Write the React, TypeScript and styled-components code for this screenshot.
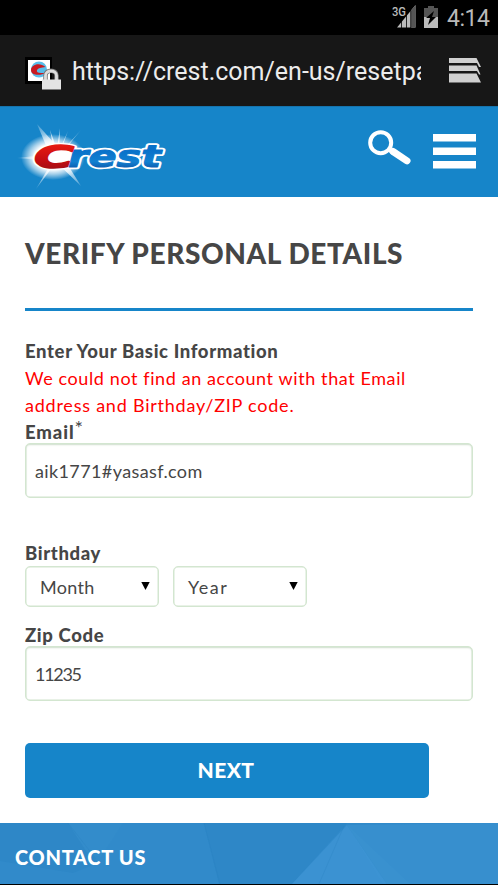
import React from "react";
import styled, { createGlobalStyle } from "styled-components";

const Global = createGlobalStyle`
  * { box-sizing: border-box; }
  body { margin: 0; background: #fff; }
`;

const Screen = styled.div`
  width: 498px;
  height: 885px;
  display: flex;
  flex-direction: column;
  overflow: hidden;
  background: #fff;
  color: #464646;
  font-family: Lato, sans-serif;
  font-size: 18px;
`;

const StatusBar = styled.div`
  height: 35px;
  flex: none;
  display: flex;
  justify-content: flex-end;
  align-items: flex-start;
  padding-right: 9px;
  background: #000;
`;

const Clock = styled.span`
  width: 42px;
  margin-left: 8px;
  font: 400 23px/37px Roboto, sans-serif;
  letter-spacing: -0.5px;
  color: #b9b9b9;
  white-space: nowrap;
`;

const AddressBar = styled.div`
  height: 71px;
  flex: none;
  display: flex;
  align-items: center;
  padding: 0 16px 0 25px;
  background: #171717;
`;

const Url = styled.span`
  width: 349px;
  margin: 2px 0 0 10px;
  overflow: hidden;
  white-space: nowrap;
  font: 400 25px/36px Roboto, sans-serif;
  color: #ececec;
`;

const TabsIcon = styled.svg`
  margin-left: auto;
  display: block;
`;

const SiteHeader = styled.header`
  height: 91px;
  flex: none;
  display: flex;
  align-items: flex-start;
  background: #1685c9;
  border-top: 1px solid #1674ad;
`;

const HeaderIcons = styled.svg`
  margin-left: auto;
  display: block;
`;

const Main = styled.main`
  height: 626px;
  flex: none;
  padding: 38px 25px 0;
  display: flex;
  flex-direction: column;
`;

const Title = styled.h1`
  margin: 0;
  height: 73px;
  font-size: 28px;
  line-height: 36px;
  font-weight: 900;
  letter-spacing: 0.6px;
  white-space: nowrap;
`;

const Rule = styled.div`
  height: 3px;
  flex: none;
  background: #1685c9;
  margin-bottom: 27px;
`;

const Label = styled.label<{ $height: number; $spacing?: number }>`
  display: block;
  flex: none;
  font-size: 18.5px;
  line-height: 27px;
  font-weight: 900;
  height: ${(p) => p.$height}px;
  letter-spacing: ${(p) => p.$spacing ?? 0.63}px;
  white-space: nowrap;
`;

const Star = styled.span`
  font-size: 20px;
  font-weight: 400;
  line-height: 0;
  letter-spacing: 0;
  vertical-align: 4px;
`;

const ErrorText = styled.p<{ $spacing: number }>`
  margin: 0;
  line-height: 27px;
  color: #f00;
  letter-spacing: ${(p) => p.$spacing}px;
  white-space: nowrap;
`;

const Field = styled.div<{ $spacing: number }>`
  height: 55px;
  flex: none;
  margin-bottom: 42px;
  padding-left: 9px;
  border: 1px solid #d3e6d0;
  border-radius: 5px;
  box-shadow: inset 0 1px 2px #d3e0d1, inset 0 0 0 0.5px #d3e6d0;
  line-height: 54px;
  letter-spacing: ${(p) => p.$spacing}px;
`;

const Selects = styled.div`
  display: flex;
  gap: 14px;
  flex: none;
  margin-bottom: 15px;
`;

const Select = styled.div<{ $spacing: number }>`
  width: 134px;
  height: 41px;
  display: flex;
  align-items: center;
  justify-content: space-between;
  padding: 0 8px 0 14px;
  border: 1px solid #d3e6d0;
  border-radius: 5px;
  box-shadow: inset 0 0 0 0.5px #d3e6d0;
  letter-spacing: ${(p) => p.$spacing}px;
`;

const NextButton = styled.button`
  width: 404px;
  height: 55px;
  flex: none;
  border: 0;
  border-radius: 5px;
  background: #1685c9;
  color: #fff;
  font: 900 21px/54px Lato, sans-serif;
  letter-spacing: 0.4px;
  padding: 0 2px 1px 0;
`;

const Footer = styled.footer`
  height: 62px;
  flex: none;
  display: grid;
  border-bottom: 1px solid #000;
  > * { grid-area: 1 / 1; }
`;

const FooterText = styled.span`
  padding: 0 0 0 15px;
  line-height: 68px;
  font-size: 20px;
  font-weight: 900;
  letter-spacing: 0.7px;
  color: #fff;
  white-space: nowrap;
`;

function StatusIcons() {
  return (
    <svg width="47" height="35">
      <path d="M5 27.500 23.500 5v22.500z" fill="#bbb" />
      <path d="M19 10.500 23.500 5v22.500h-4.500z" fill="#555" />
      <path d="M9.500 21v7M14.500 15v13M18.700 10v18" stroke="#000" strokeWidth=".8" />
      <text x="0" y="15.700" fontFamily="Roboto" fontWeight="500" fontSize="12.500" textLength="14" lengthAdjust="spacingAndGlyphs" fill="#bbb" stroke="#000" strokeWidth="1" paintOrder="stroke">3G</text>
      <path d="M32 8h4V6h6v2h4v10H32z" fill="#555" />
      <path d="M32 17h14v11H32z" fill="#bbb" />
      <path d="m42 11-8 7h4l-2 7 8-8h-4z" fill="#000" />
    </svg>
  );
}

function Favicon() {
  return (
    <svg width="37" height="71">
      <path fill="#000" d="M0 22h27v27H0z" />
      <path fill="#fff" d="M3 25h22v21H3z" />
      <circle cx="14" cy="34.500" r="8" fill="#58bde9" />
      <path d="M20.500 32C14 26.500 6 30 6 35c0 6 10 6 15 2.500-7 1.500-10 0-9-2.500 1-2 4-2.500 8.500-3Z" fill="#c91920" />
      <path d="M20.500 45v-4.500c0-6.500 11-6.500 11 0V45" fill="none" stroke="#777" strokeWidth="4.500" />
      <path d="M20.500 45v-4.500c0-6 11-6 11 0V45" fill="none" stroke="#ddd" strokeWidth="2.800" />
      <path d="M17 44.500h19v10H17z" fill="#e4e4e4" />
    </svg>
  );
}

function CrestLogo() {
  const rays = [
    [37, 18, 3], [81, 24, 2], [36, 83, 3], [81, 80, 2], [17, 52, 3],
    [50, 24, 1], [60, 22, 1], [68, 25, 1],
  ];
  return (
    <svg width="180" height="90" viewBox="0 1 180 90">
      <defs>
        <radialGradient id="glow">
          <stop offset="0.550" stopColor="#fff" />
          <stop offset="0.750" stopColor="#fff" stopOpacity=".6" />
          <stop offset="1" stopColor="#fff" stopOpacity="0" />
        </radialGradient>
        <radialGradient id="ray" gradientUnits="userSpaceOnUse" cx="58" cy="51" r="42">
          <stop offset=".4" stopColor="#fff" stopOpacity=".8" />
          <stop offset="1" stopColor="#fff" stopOpacity=".08" />
        </radialGradient>
        <linearGradient id="red" x1="0" y1="0" x2="0" y2="1">
          <stop offset=".2" stopColor="#e51912" />
          <stop offset=".6" stopColor="#c30d12" />
          <stop offset="1" stopColor="#8b1018" />
        </linearGradient>
        <linearGradient id="blue" x1="0" y1="0" x2="0" y2="1">
          <stop offset=".3" stopColor="#0870c9" />
          <stop offset=".65" stopColor="#1180d0" />
          <stop offset="1" stopColor="#083c91" />
        </linearGradient>
      </defs>
      <ellipse cx="53" cy="51" rx="32" ry="23" fill="url(#glow)" />
      {rays.map(([x, y, w]) => (
        <path key={x + "-" + y} d={`M${x} ${y}L${57 - w * 1.5} ${52 + w}L${57 + w * 2} ${50 - w}Z`} fill="url(#ray)" />
      ))}
      <g fontFamily="DejaVu Sans" fontWeight="700" fontStyle="italic" strokeLinejoin="round">
        <text x="68" y="61" fontSize="30" textLength="93" lengthAdjust="spacingAndGlyphs" fill="#fff" stroke="#fff" strokeWidth="4.500">rest</text>
        <text x="34" y="62" fontSize="32" textLength="40" lengthAdjust="spacingAndGlyphs" fill="#fff" stroke="#fff" strokeWidth="4">C</text>
        <text x="68" y="61" fontSize="30" textLength="93" lengthAdjust="spacingAndGlyphs" fill="url(#blue)" stroke="url(#blue)" strokeWidth="1">rest</text>
        <text x="34" y="62" fontSize="32" textLength="40" lengthAdjust="spacingAndGlyphs" fill="url(#red)" stroke="url(#red)" strokeWidth="1.500">C</text>
      </g>
    </svg>
  );
}

function FooterBackdrop() {
  return (
    <svg width="498" height="61">
      <path fill="#318aca" d="M0 0h498v61H0z" />
      <path fill="#2e87c7" d="M0 0h68l30 40-25 10-73-12z" />
      <path fill="#338ccb" d="M68 0h55l-22 34-13-3z" />
      <path fill="#2e87c7" d="M204 0h143l-55 61h-73z" />
      <path fill="#3b92d2" d="m347 2-55 59h95z" />
      <path fill="#378fce" d="m347 2 151-2v61H387z" />
      <path fill="none" stroke="#277fbe" strokeOpacity=".25" d="m68 0 28 36M204 0l16 61M344 3l-25 58" />
      <path fill="#439ad6" fillOpacity=".2" d="m347 2 63 59h-27z" />
    </svg>
  );
}

const Arrow = () => (
  <svg width="9" height="9"><path d="M.3 0h8.400L4.500 8z" fill="#000" /></svg>
);

export default function App() {
  return (
    <Screen>
      <Global />
      <StatusBar>
        <StatusIcons />
        <Clock>4:14</Clock>
      </StatusBar>
      <AddressBar>
        <Favicon />
        <Url>https://crest.com/en-us/resetpassword</Url>
        <TabsIcon width="33" height="71">
          <g fill="#d0d0d0">
            <path d="M0 23h27.500l4.500 9h-2l-2-4H0zM0 30.500h27.500l4 9h-1.500L28 36H0zM0 38.500h27.500L32 47.500H0z" />
          </g>
        </TabsIcon>
      </AddressBar>
      <SiteHeader>
        <CrestLogo />
        <HeaderIcons width="148" height="90" viewBox="0 1 148 90">
          <circle cx="30.700" cy="36.700" r="10.500" fill="none" stroke="#fff" strokeWidth="4" />
          <path d="m39 43 4 4" stroke="#fff" strokeWidth="4" />
          <path d="m43 45.500 14 9.300" stroke="#fff" strokeWidth="7" strokeLinecap="round" />
          <path d="M83 28h43v7.500H83zM83 41.500h43V49H83zM83 55h43v7.500H83z" fill="#fff" />
        </HeaderIcons>
      </SiteHeader>
      <Main>
        <Title>VERIFY PERSONAL DETAILS</Title>
        <Rule />
        <Label $height={27}>Enter Your Basic Information</Label>
        <ErrorText $spacing={0.6}>We could not find an account with that Email</ErrorText>
        <ErrorText $spacing={0.77}>address and Birthday/ZIP code.</ErrorText>
        <Label $height={24} $spacing={0.9}>Email<Star>*</Star></Label>
        <Field $spacing={0.38}>aik1771#yasasf.com</Field>
        <Label $height={26}>Birthday</Label>
        <Selects>
          <Select $spacing={0.3}>Month<Arrow /></Select>
          <Select $spacing={1.5}>Year<Arrow /></Select>
        </Selects>
        <Label $height={24}>Zip Code</Label>
        <Field $spacing={-1.3}>11235</Field>
        <NextButton>NEXT</NextButton>
      </Main>
      <Footer>
        <FooterBackdrop />
        <FooterText>CONTACT US</FooterText>
      </Footer>
    </Screen>
  );
}
